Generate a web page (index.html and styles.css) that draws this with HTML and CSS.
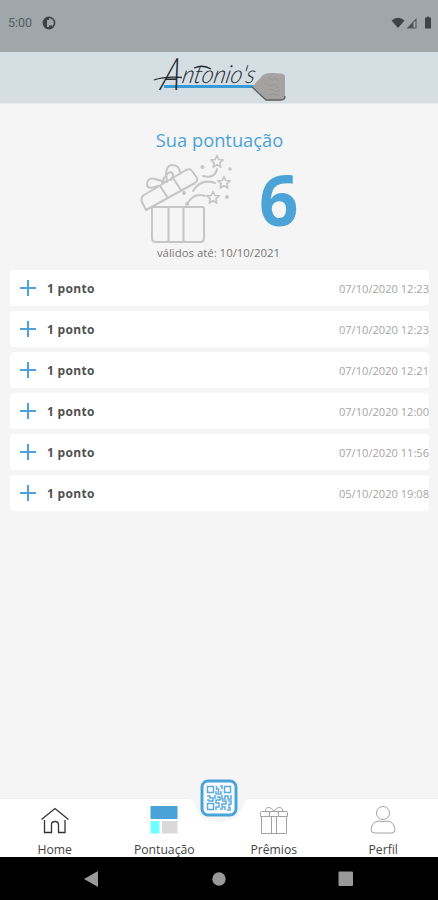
FILE: index.html
```html
<!DOCTYPE html>
<html lang="pt-BR">
<head>
<meta charset="utf-8">
<meta name="viewport" content="width=device-width, initial-scale=1">
<title>Pontuação</title>
<link rel="stylesheet" href="styles.css">
</head>
<body>
<div class="status">
  <span class="clock">5:00</span>
  <svg class="app-dot" width="14" height="14" viewBox="0 0 14 14"><circle cx="7" cy="7" r="5.6" fill="none" stroke="#3d4447" stroke-width="1.6"/><path d="M1.500 8C1 3 4 1 7 1v12C4 13 2 11 1.500 8z" fill="#3d4447"/><path d="M5 4h4.500v3.500H7V11H5z" fill="#9fa7aa"/><path d="M7 9.500h4L8.500 13H7z" fill="#3d4447"/></svg>
  <svg class="signals" width="42" height="14" viewBox="0 0 42 14"><path d="M.5 4.500Q7-1 13.500 4.500L7 12z" fill="#3d4447"/><path d="M15.500 12.500L25.500 2v10.500z" fill="#4f5659"/><path d="M22.500 6.500v5h2v-7z" fill="#9fa7aa"/><path d="M34 1.500h2V.5h2v1h2V12.500h-6z" fill="#3d4447"/></svg>
</div>
<header class="header">
  <svg class="logo" width="134" height="50" viewBox="0 0 134 50">
    <path d="M11 34.500H101" stroke="#369bd8" stroke-width="3"/>
    <g transform="translate(5 31) skewX(-12)"><text class="script cap" x="3" y="7" textLength="19" lengthAdjust="spacingAndGlyphs">A</text><text class="script" x="23" y="0" textLength="73" lengthAdjust="spacingAndGlyphs">ntonio's</text></g>
    <path d="M1 28Q12 24 29 25.500M41 16Q50 12 58 17" fill="none" stroke="#222a2e" stroke-width="1.300"/>
    <path d="M99 35L110 23Q114 20.500 119 21l9 .5q4 .5 4 4V44q0 4-4 4h-15z" fill="#a5a2a2"/>
    <path d="M99 35L113 48h15q4 0 4-4" fill="none" stroke="#5f5c5c" stroke-width="1.300"/>
    <path d="M115 26l4 2 3-2 4 3M112 32l5 2 4-2 5 4M115 38l4-1 3 3 5-2M116 43l5-1 6 2" fill="none" stroke="#959191" stroke-width=".8"/>
  </svg>
</header>
<main class="main">
  <h1 class="title">Sua pontuação</h1>
  <div class="score">
    <svg class="surprise" width="94" height="92" viewBox="0 0 94 92" fill="none" stroke="#c6c6c6" stroke-width="2" stroke-linejoin="round" stroke-linecap="round">
      <path d="M12 53H62q2 0 2 2V84q0 4-4 4H16q-4 0-4-4V53M28.500 53V88M43.500 53V88"/>
      <path d="M6 56L1.500 47Q1 43 4 41L46 16q4-2 6 1l5 7q1 3-2 5zM20 32l8 12M33 24l8 12"/>
      <path d="M18 32Q8 36 7 31 7 23 15 25q6 2 12 3M27 27Q24 12 32 11q8 0 8 9"/>
      <path d="M22 29Q25 19 31 18q4 2 0 8"/>
      <path d="M63 22q12 3 14-7M53 37Q61 24 75 29M47 50Q54 38 65 42" />
      <g stroke-width="1.700"><path id="star" d="M77 1.500l1.800 4 4.300.4-3.300 2.900 1 4.300-3.800-2.300-3.800 2.300 1-4.300L70.900 5.900l4.300-.4z"/><use href="#star" x="7" y="21"/><use href="#star" x="-4" y="36"/></g>
      <g fill="#c6c6c6" stroke="none"><circle cx="62.500" cy="13" r="2"/><circle cx="90" cy="15" r="1.700"/><circle cx="44" cy="39" r="2"/><circle cx="87" cy="43" r="2"/><circle cx="47" cy="50" r="2"/></g>
    </svg>
    <strong class="points">6</strong>
  </div>
  <p class="valid">válidos até: 10/10/2021</p>
  <ul class="list">
    <li class="row"><i class="plus"></i><b>1 ponto</b><time>07/10/2020 12:23</time></li>
    <li class="row"><i class="plus"></i><b>1 ponto</b><time>07/10/2020 12:23</time></li>
    <li class="row"><i class="plus"></i><b>1 ponto</b><time>07/10/2020 12:21</time></li>
    <li class="row"><i class="plus"></i><b>1 ponto</b><time>07/10/2020 12:00</time></li>
    <li class="row"><i class="plus"></i><b>1 ponto</b><time>07/10/2020 11:56</time></li>
    <li class="row"><i class="plus"></i><b>1 ponto</b><time>05/10/2020 19:08</time></li>
  </ul>
</main>
<nav class="tabs">
  <a class="tab"><svg width="30" height="30" viewBox="0 0 30 30" fill="none" stroke="#333" stroke-width="1.300"><path d="M1.500 13.500L15 2.500l13.500 11M4.500 14v12.500H11.500V19q0-3.500 3.500-3.500t3.500 3.500v7.500h6.500V14"/></svg><span>Home</span></a>
  <a class="tab"><svg width="30" height="30" viewBox="0 0 30 30"><path fill="#4aa3d8" d="M1.500 0h27v13h-27z"/><path fill="#70ffff" d="M1.500 15h9v12.500h-9z"/><path fill="#d9d9d9" d="M13 15h15.500v12.500H13z"/></svg><span>Pontuação</span></a>
  <a class="tab"><svg width="30" height="30" viewBox="0 0 30 30" fill="none" stroke="#a3a3a3" stroke-width="1"><path d="M1.500 6.500q0-1 1-1h8v5h-9zM19.500 5.500h8q1 0 1 1v4h-9zM10.500 5.500h9M10.500 10.500h9M2.500 10.500v17h25v-17M12.500 10.500v17M17.500 10.500v17M6.500 5C6 .5 12 0 15 5.500 18 0 24 .5 23.500 5M11 6l4-1 4 1"/></svg><span>Prêmios</span></a>
  <a class="tab"><svg width="30" height="30" viewBox="0 0 30 30" fill="none" stroke="#a3a3a3" stroke-width="1"><circle cx="15" cy="7" r="6.500"/><path d="M6.500 27Q3 27 3 23.500 4 15.500 11 15q4 1.500 8 0 7 .5 8 8.500 0 3.500-3.500 3.500z"/></svg><span>Perfil</span></a>
  <div class="scan">
    <svg class="notch" width="66" height="28" viewBox="0 0 66 28"><path fill="#f5f5f5" d="M0 0Q7 0 9 8 14 24 33 24T57 8Q59 0 66 0z"/></svg>
    <svg class="qr" width="38" height="38" viewBox="0 0 38 38"><rect x="2" y="2" width="34" height="34" rx="6" fill="#f8fbfd" stroke="#4aa3d8" stroke-width="3"/><g fill="none" stroke="#5eace0" stroke-width="1.500"><path d="M7.500 7.500h6v6h-6zM24.500 7.500h6v6h-6zM7.500 24.500h6v6h-6z"/><path d="M16.500 7v3h2v4M20 7h2v3M16 12v3h5v-3M7 17h3v2h5v-3M7 21h2v1h4v-3M17 18h3v3h-4v3h3v4h-3v3M22 16v4h3v-3h3v3h3v-4M22 22h4v3h-4v3h3v3M28 22h3v3h-2v4h2M20 30h3M27 31h4"/></g></svg>
  </div>
</nav>
<footer class="system">
  <svg width="16" height="18" viewBox="0 0 16 18"><path fill="#999" d="M0 9L14 1v16z"/></svg>
  <svg width="14" height="14" viewBox="0 0 14 14"><circle cx="7" cy="7" r="6.700" fill="#999"/></svg>
  <svg width="16" height="16" viewBox="0 0 16 16"><rect x=".5" y=".5" width="14.500" height="14.500" rx="1" fill="#999"/></svg>
</footer>
</body>
</html>
```

FILE: styles.css
```css
* { box-sizing: border-box; }
body {
  margin: 0;
  height: 900px;
  display: flex;
  flex-direction: column;
  background: #f5f5f5;
  font-family: "Open Sans", sans-serif;
  overflow: hidden;
}
svg { display: block; flex: none; }
.status {
  height: 52px;
  padding: 0 5px 6px 8px;
  display: flex;
  align-items: center;
  background: #9fa7aa;
}
.clock { font: 12.5px/14px Roboto, sans-serif; color: #555d60; width: 34px; }
.signals { margin-left: auto; }
.header {
  height: 52px;
  display: flex;
  justify-content: center;
  background: #d4dee3;
  border-bottom: 1px solid #e6ebee;
}
.logo { margin: 0 0 0 1px; overflow: visible; }
.script { font: italic 300 25px/1 Lato, sans-serif; fill: #222a2e; }
.cap { font-size: 45px; }
.main { flex: 1; padding: 22px 9px 0 10px; }
.title {
  margin: 0;
  font-size: 18.3px;
  font-weight: 400;
  line-height: 28px;
  text-align: center;
  color: #4ba3d7;
}
.score { display: flex; height: 91px; padding-left: 130px; }
.points {
  margin-left: 25px;
  font-size: 69px;
  line-height: 91px;
  color: #4ba3d7;
}
.valid {
  margin: 0;
  height: 25px;
  padding-right: 2px;
  font-size: 11.4px;
  line-height: 16px;
  text-align: center;
  color: #777;
}
.list {
  margin: 0;
  padding: 0;
  list-style: none;
  display: grid;
  gap: 5px;
}
.row {
  height: 36px;
  display: flex;
  align-items: center;
  padding-left: 10px;
  background: #fff;
  border-radius: 4px;
  font-size: 12px;
  color: #505050;
}
.row b { letter-spacing: .3px; }
.plus {
  width: 16px;
  height: 16px;
  margin-right: 11px;
  background:
    linear-gradient(#4ba3d7, #4ba3d7) center / 16px 2px no-repeat,
    linear-gradient(#4ba3d7, #4ba3d7) center / 2px 16px no-repeat;
}
.row time { margin-left: auto; font-size: 11.1px; color: #a5a5a5; }
.tabs {
  position: relative;
  height: 59px;
  display: grid;
  grid-template-columns: repeat(4, 1fr);
  background: #fff;
  border-top: 1px solid #eee;
}
.tab {
  display: flex;
  flex-direction: column;
  align-items: center;
  padding-top: 7px;
  font-size: 12.2px;
  line-height: 14px;
  color: #444;
}
.tab span { margin-top: 7px; }
.scan {
  position: absolute;
  top: -20px;
  left: 50%;
  width: 66px;
  margin-left: -33px;
  display: grid;
  justify-items: center;
}
.notch { grid-area: 1 / 1; margin-top: 19px; }
.qr { grid-area: 1 / 1; }
.system {
  height: 43px;
  display: flex;
  align-items: center;
  justify-content: space-between;
  padding: 0 84px;
  background: #000;
}
```
